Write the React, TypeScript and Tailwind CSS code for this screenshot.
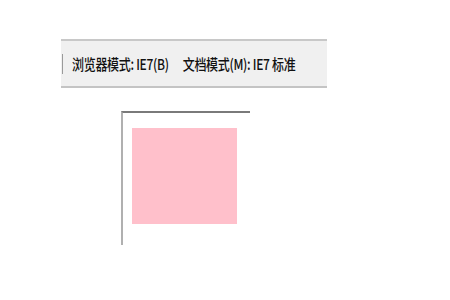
export default function App() {
  return (
    <div className="relative w-[450px] h-[300px] bg-white overflow-hidden">
      <div className="pt-[39px] pl-[61px]">
        <div className="w-[266px] h-[49px] flex items-center bg-[#f0f0f0] border-t-2 border-t-[#c8c8c8] border-b-2 border-b-[#c4c4c4]">
          <div className="ml-[1px] w-[1px] h-[20px] bg-[#9a9a9a]" />
          <div
            className="ml-[9px] flex items-center gap-[14px] text-[12px] font-medium text-[#111] whitespace-pre tracking-[-0.3px] scale-y-[1.25]"
            style={{ fontFamily: '"Noto Sans CJK SC", sans-serif' }}
          >
            <span>浏览器模式: IE7(B)</span>
            <span>文档模式(M): IE7 标准</span>
          </div>
        </div>
      </div>
      <div className="ml-[121px] mt-[23px] w-[129px] h-[134px] border-t-2 border-t-[#7a7a7a] border-l-2 border-l-[#b0b0b0] pt-[15px] pl-[9px]">
        <div className="w-[105px] h-[96px] bg-[#ffc0cb]" />
      </div>
    </div>
  );
}
